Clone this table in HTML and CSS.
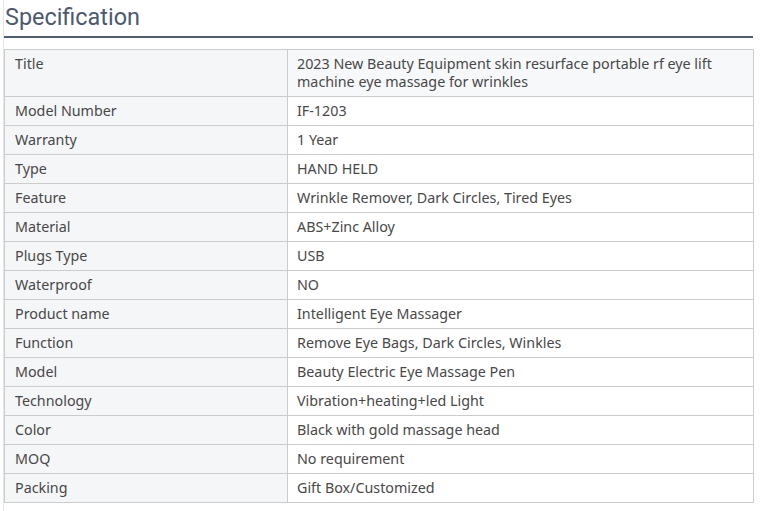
FILE: index.html
```html
<!DOCTYPE html>
<html>
<head>
<meta charset="utf-8">
<link rel="stylesheet" href="styles.css">
</head>
<body>
<div class="page">
  <h2 class="spec-title">Specification</h2>
  <table class="spec">
    <colgroup><col class="c1"><col class="c2"></colgroup>
    <tbody>
      <tr class="first"><td class="k">Title</td><td class="v">2023 New Beauty Equipment skin resurface portable rf eye lift machine eye massage for wrinkles</td></tr>
      <tr><td class="k">Model Number</td><td class="v">IF-1203</td></tr>
      <tr><td class="k">Warranty</td><td class="v">1 Year</td></tr>
      <tr><td class="k">Type</td><td class="v">HAND HELD</td></tr>
      <tr><td class="k">Feature</td><td class="v">Wrinkle Remover, Dark Circles, Tired Eyes</td></tr>
      <tr><td class="k">Material</td><td class="v">ABS+Zinc Alloy</td></tr>
      <tr><td class="k">Plugs Type</td><td class="v">USB</td></tr>
      <tr><td class="k">Waterproof</td><td class="v">NO</td></tr>
      <tr><td class="k">Product name</td><td class="v">Intelligent Eye Massager</td></tr>
      <tr><td class="k">Function</td><td class="v">Remove Eye Bags, Dark Circles, Winkles</td></tr>
      <tr><td class="k">Model</td><td class="v">Beauty Electric Eye Massage Pen</td></tr>
      <tr><td class="k">Technology</td><td class="v">Vibration+heating+led Light</td></tr>
      <tr><td class="k">Color</td><td class="v">Black with gold massage head</td></tr>
      <tr><td class="k">MOQ</td><td class="v">No requirement</td></tr>
      <tr><td class="k">Packing</td><td class="v">Gift Box/Customized</td></tr>
    </tbody>
  </table>
</div>
</body>
</html>
```

FILE: styles.css
```css
html, body {
  margin: 0;
  padding: 0;
  background: #fff;
}
.page {
  margin-left: 3px;
  width: 750px;
  border-left: 1px solid #e6e6e6;
  min-height: 511px;
  box-sizing: border-box;
}
.spec-title {
  margin: 0;
  padding: 3px 0 0 1px;
  height: 33px;
  font-family: Roboto, "Liberation Sans", sans-serif;
  font-weight: 400;
  font-size: 23.4px;
  line-height: 29px;
  color: #4b5a70;
  border-bottom: 2px solid #4e5d73;
  box-sizing: content-box;
}
.spec {
  margin-top: 11px;
  width: 750px;
  border-collapse: collapse;
  table-layout: fixed;
  font-family: "Noto Sans", "Open Sans", sans-serif;
  font-size: 14.3px;
  line-height: 18px;
  color: #484848;
}
.c1 { width: 283px; }
.spec td {
  border: 1px solid #cccccc;
  padding: 5px 10px 5px 10px;
  vertical-align: top;
}
.spec td.v {
  padding-left: 9px;
}
.spec td.k {
  background: #f5f6f8;
}
.spec tr.first td.v {
  background: #f7f8fa;
}
```
